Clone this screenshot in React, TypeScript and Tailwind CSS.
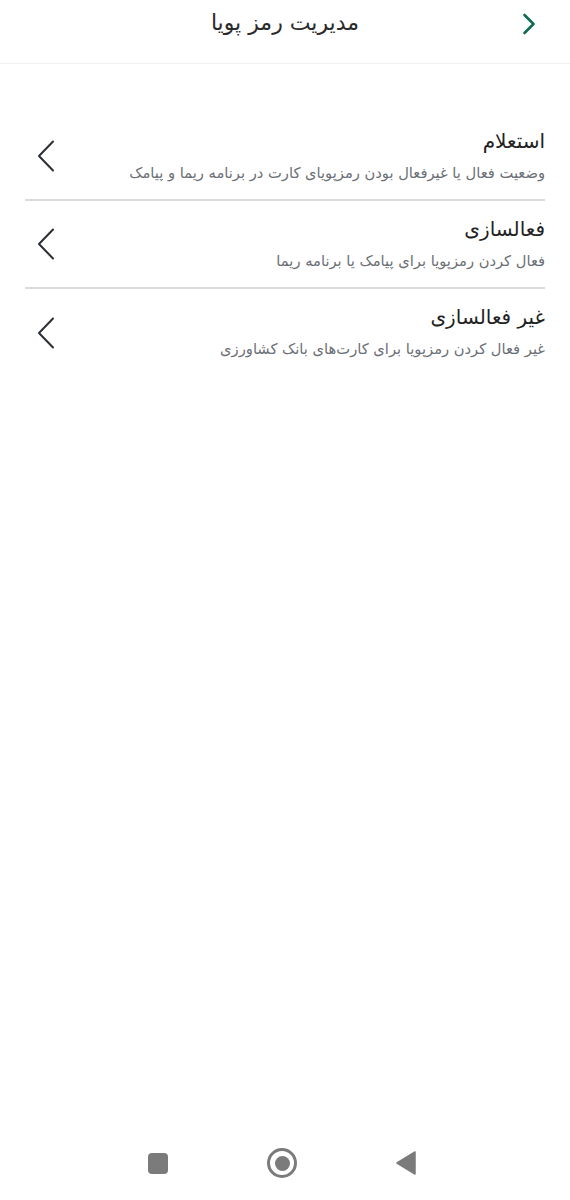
import React from "react";

const items = [
  {
    title: "استعلام",
    desc: "وضعیت فعال یا غیرفعال بودن رمزپویای کارت در برنامه ریما و پیامک",
  },
  {
    title: "فعالسازی",
    desc: "فعال کردن رمزپویا برای پیامک یا برنامه ریما",
  },
  {
    title: "غیر فعالسازی",
    desc: "غیر فعال کردن رمزپویا برای کارت‌های بانک کشاورزی",
  },
];

function ChevronLeft() {
  return (
    <svg width="18" height="32" viewBox="0 0 18 32" fill="none">
      <path d="M16 1.5 L2 16 L16 30.5" stroke="#2b2f36" strokeWidth="2" strokeLinecap="round" strokeLinejoin="round" />
    </svg>
  );
}

export default function App() {
  return (
    <div
      className="min-h-[1200px] w-full bg-white flex flex-col"
      style={{ fontFamily: '"DejaVu Sans", "Noto Sans", sans-serif' }}
    >
      <header className="h-16 border-b border-[#efefef] flex items-center justify-center relative">
        <h1 dir="rtl" className="text-[22px] text-[#2a2a2a] -mt-[18px]">مدیریت رمز پویا</h1>
        <button className="absolute right-[34px] top-[13px]">
          <svg width="14" height="22" viewBox="0 0 14 22" fill="none">
            <path d="M2.5 2 L11.5 11 L2.5 20" stroke="#0e6b55" strokeWidth="2.6" strokeLinecap="round" strokeLinejoin="round" />
          </svg>
        </button>
      </header>

      <div className="mt-[49px] px-[25px]">
        {items.map((it, i) => (
          <div
            key={it.title}
            className={
              "h-[88px] flex items-center justify-between pl-[12px] " +
              (i < items.length - 1 ? "border-b-2 border-[#dcdcdc]" : "")
            }
          >
            <ChevronLeft />
            <div dir="rtl" className="flex flex-col self-start pt-[14px]">
              <div className="text-[20px] leading-[28px] text-[#222]">{it.title}</div>
              <div className="text-[14.7px] leading-[22px] text-[#6b6f75] mt-[7px]">{it.desc}</div>
            </div>
          </div>
        ))}
      </div>

      <div className="flex-1" />

      <nav className="h-[74px] flex items-center justify-center gap-[99px] pr-[6px]">
        <div className="w-[20px] h-[21px] rounded-[4px] bg-[#7b7b7b]" />
        <div className="w-[30px] h-[30px] rounded-full border-[3px] border-[#7b7b7b] flex items-center justify-center">
          <div className="w-[15px] h-[15px] rounded-full bg-[#7b7b7b]" />
        </div>
        <svg width="20" height="24" viewBox="0 0 20 24">
          <path d="M19 1 L19 23 L1 12 Z" fill="#7b7b7b" strokeLinejoin="round" stroke="#7b7b7b" strokeWidth="1.5" />
        </svg>
      </nav>
    </div>
  );
}
